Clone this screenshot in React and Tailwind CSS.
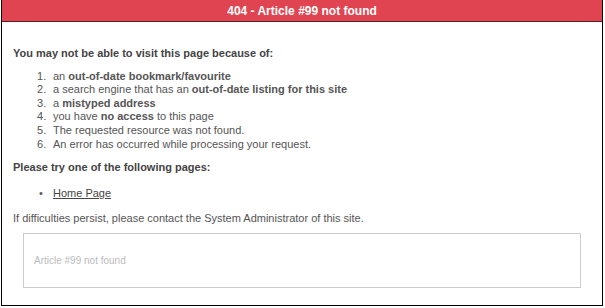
import React from 'react';

const reasons = [
  <>an <b>out-of-date bookmark/favourite</b></>,
  <>a search engine that has an <b>out-of-date listing for this site</b></>,
  <>a <b>mistyped address</b></>,
  <>you have <b>no access</b> to this page</>,
  <>The requested resource was not found.</>,
  <>An error has occurred while processing your request.</>,
];

const App = () => {
  return (
    <div className="w-[605px] h-[308px] bg-white font-['Liberation_Sans',Arial,sans-serif] text-[#555]">
      <div className="ml-px w-[602px] h-[306px] border-l border-r border-b border-black flex flex-col">
        {/* Header */}
        <div className="h-[22px] bg-[#e04451] border-b border-[#5a1d22] flex items-center justify-center">
          <h1 className="text-white font-bold text-[12px] leading-none">404 - Article #99 not found</h1>
        </div>

        <div className="px-[11px] text-[11px] leading-[13.6px]">
          <p className="mt-[25px] font-bold text-[#444]">You may not be able to visit this page because of:</p>

          <ol className="mt-[9px] pl-[24px]">
            {reasons.map((r, i) => (
              <li key={i} className="flex">
                <span className="w-[16px]">{i + 1}.</span>
                <span>{r}</span>
              </li>
            ))}
          </ol>

          <p className="mt-[10px] font-bold text-[#444]">Please try one of the following pages:</p>

          <ul className="mt-[12px] pl-[26px]">
            <li className="flex">
              <span className="w-[14px]">•</span>
              <a className="underline text-[#444]">Home Page</a>
            </li>
          </ul>

          <p className="mt-[12px]">If difficulties persist, please contact the System Administrator of this site.</p>

          <div className="mt-[7px] mx-[10px] h-[55px] border border-[#ccc] flex items-center px-[10px]">
            <span className="text-[10px] text-[#bbb]">Article #99 not found</span>
          </div>
        </div>
      </div>
    </div>
  );
};

export default App;
